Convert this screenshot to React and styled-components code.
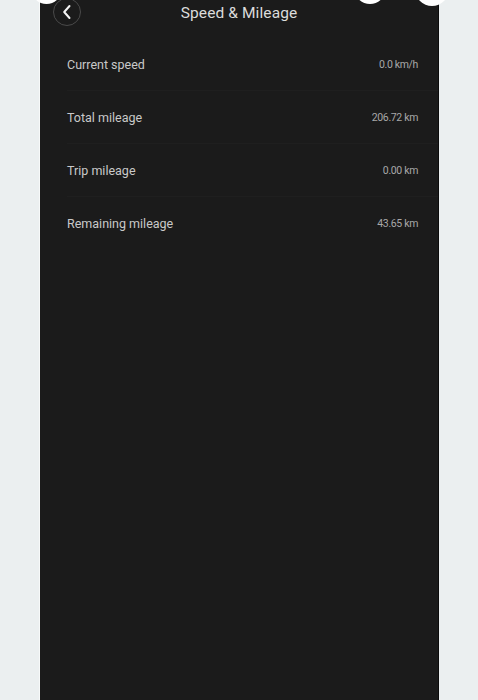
import styled, { createGlobalStyle } from "styled-components";

const GlobalStyle = createGlobalStyle`
  html, body {
    margin: 0;
    padding: 0;
    background: #ebeff0;
    font-family: Roboto, "Noto Sans", sans-serif;
  }
`;

const Page = styled.div`
  position: relative;
  width: 478px;
  height: 700px;
  overflow: hidden;
  display: flex;
  justify-content: flex-start;
  background: #ebeff0;
`;

const Screen = styled.main`
  margin-left: 40px;
  width: 398px;
  height: 700px;
  background: #1b1b1b;
  border-right: 1px solid #0c0c0c;
  box-shadow: -1px 0 0 #f7f9f9;
  display: flex;
  flex-direction: column;
`;

const Header = styled.header`
  position: relative;
  height: 25px;
  display: flex;
  align-items: center;
  justify-content: center;
`;

const BackButton = styled.button`
  position: absolute;
  left: 13px;
  top: -2px;
  width: 28px;
  height: 28px;
  border-radius: 50%;
  border: 1px solid #4a4a4a;
  background: transparent;
  padding: 0;
  display: flex;
  align-items: center;
  justify-content: center;
`;

const Title = styled.h1`
  margin: 0;
  font-size: 15.5px;
  font-weight: 400;
  color: #dcdcdc;
  letter-spacing: 0.1px;
`;

const List = styled.ul`
  list-style: none;
  margin: 0;
  padding: 13px 0 0 27px;
`;

const Row = styled.li`
  height: 53px;
  display: flex;
  align-items: center;
  justify-content: space-between;
  padding-right: 20px;
  box-sizing: border-box;
  border-bottom: 1px solid ${(p) => (p.$last ? "transparent" : "#1f1f1f")};
`;

const Label = styled.span`
  font-size: 12.5px;
  color: #c9c9c9;
`;

const Value = styled.span`
  font-size: 10.5px;
  color: #a8a8a8;
  letter-spacing: -0.35px;
`;

const Bubble = styled.span`
  position: absolute;
  top: ${(p) => p.$top}px;
  left: ${(p) => p.$left}px;
  width: ${(p) => p.$size}px;
  height: ${(p) => p.$size}px;
  border-radius: 50%;
  background: #ffffff;
`;

const rows = [
  ["Current speed", "0.0 km/h"],
  ["Total mileage", "206.72 km"],
  ["Trip mileage", "0.00 km"],
  ["Remaining mileage", "43.65 km"],
];

export default function App() {
  return (
    <Page>
      <GlobalStyle />
      <Screen>
        <Header>
          <BackButton aria-label="Back">
            <svg width="12" height="16" viewBox="0 0 12 16">
              <path
                d="M8.5 2 L3.2 8 L8.5 14"
                fill="none"
                stroke="#f4f4f4"
                strokeWidth="2"
                strokeLinecap="round"
                strokeLinejoin="round"
              />
            </svg>
          </BackButton>
          <Title>Speed &amp; Mileage</Title>
        </Header>
        <List>
          {rows.map(([label, value], i) => (
            <Row key={label} $last={i === rows.length - 1}>
              <Label>{label}</Label>
              <Value>{value}</Value>
            </Row>
          ))}
        </List>
      </Screen>
      <Bubble $left={31} $top={-27} $size={31} />
      <Bubble $left={354} $top={-28} $size={32} />
      <Bubble $left={415} $top={-28} $size={34} />
    </Page>
  );
}
